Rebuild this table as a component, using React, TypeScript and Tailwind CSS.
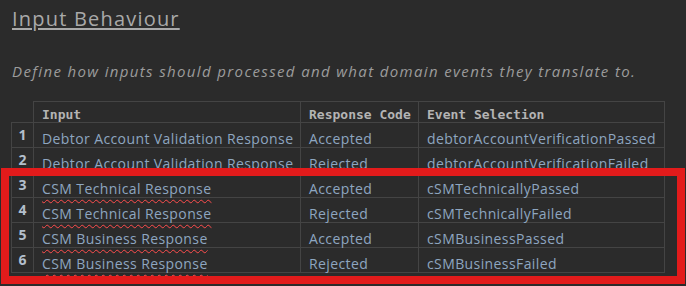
const rows = [
  { input: "Debtor Account Validation Response", code: "Accepted", event: "debtorAccountVerificationPassed", flagged: false },
  { input: "Debtor Account Validation Response", code: "Rejected", event: "debtorAccountVerificationFailed", flagged: false },
  { input: "CSM Technical Response", code: "Accepted", event: "cSMTechnicallyPassed", flagged: true },
  { input: "CSM Technical Response", code: "Rejected", event: "cSMTechnicallyFailed", flagged: true },
  { input: "CSM Business Response", code: "Accepted", event: "cSMBusinessPassed", flagged: true },
  { input: "CSM Business Response", code: "Rejected", event: "cSMBusinessFailed", flagged: true },
];

const sans = "font-['Open_Sans','DejaVu_Sans',sans-serif]";
const mono = "font-['DejaVu_Sans_Mono','Liberation_Mono',monospace]";

export default function App() {
  return (
    <div className="relative w-[686px] h-[286px] overflow-hidden bg-[#2b2b2b] px-[11px] pt-[7px]">
      {/* 标题 */}
      <h1
        className={`${sans} pl-px text-[20px] leading-[24px] tracking-[1.2px] text-[#a9a9a9] underline decoration-[1.5px] underline-offset-[2px]`}
      >
        Input Behaviour
      </h1>

      <p
        className={`${sans} mt-[31px] pl-px text-[15px] leading-[18px] italic tracking-[1.36px] text-[#9c9c9c] whitespace-nowrap`}
      >
        Define how inputs should processed and what domain events they translate to.
      </p>

      {/* 输入映射表 */}
      <table className="mt-[21px] w-[653px] table-fixed border-collapse">
        <colgroup>
          <col className="w-[22px]" />
          <col className="w-[267px]" />
          <col className="w-[118px]" />
          <col className="w-[246px]" />
        </colgroup>
        <thead>
          <tr className={`${mono} text-[13px] font-bold text-[#b4b4b4] whitespace-nowrap`}>
            <th className="p-0" />
            <th className="border border-[#444] px-2 pt-[6px] pb-0 text-left font-bold leading-[14px]">Input</th>
            <th className="border border-[#444] px-2 pt-[6px] pb-0 text-left font-bold leading-[14px]">Response Code</th>
            <th className="border border-[#444] px-2 pt-[6px] pb-0 text-left font-bold leading-[14px]">Event Selection</th>
          </tr>
        </thead>
        <tbody className={`${sans} text-[14px] tracking-[0.4px] text-[#8ea6c0] whitespace-nowrap`}>
          {rows.map((r, i) => (
            <tr key={i}>
              <td className="border border-[#444] px-0 pt-[3px] pb-0 text-center align-top text-[14px] font-bold leading-[17px] tracking-normal text-[#b3bfcc]">
                {i + 1}
              </td>
              <td className="border border-[#444] px-2 pt-[7px] pb-0 leading-[17px]">
                <span
                  className={
                    r.flagged
                      ? "underline decoration-wavy decoration-[#ff4d4d] decoration-1 underline-offset-[5px]"
                      : ""
                  }
                >
                  {r.input}
                </span>
              </td>
              <td className="border border-[#444] px-2 pt-[7px] pb-0 leading-[17px]">{r.code}</td>
              <td className="border border-[#444] px-2 pt-[7px] pb-0 leading-[17px]">{r.event}</td>
            </tr>
          ))}
        </tbody>
      </table>

      {/* 标注框 */}
      <div className="absolute left-[1px] top-[168px] h-[116px] w-[684px] border-[8px] border-[#e21b1b]" />
    </div>
  );
}
